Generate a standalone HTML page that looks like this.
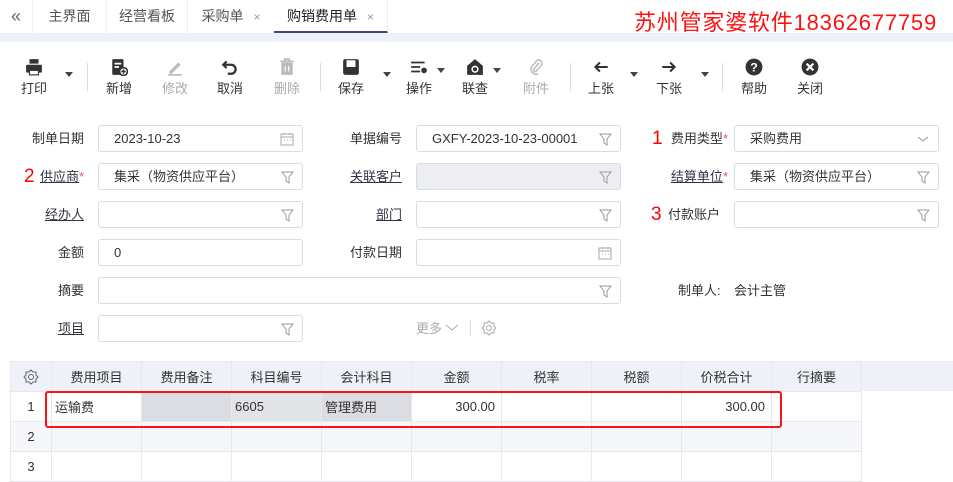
<!DOCTYPE html>
<html><head><meta charset="utf-8"><style>
*{margin:0;padding:0;box-sizing:border-box}
body{width:953px;height:471px;overflow:hidden;background:#fff;font-family:"Liberation Sans","Noto Sans CJK SC",sans-serif;font-size:13px;color:#333;position:relative}
.a{position:absolute;white-space:nowrap}
.tab{position:absolute;top:0;height:33px;line-height:33px;font-size:14px;color:#555;text-align:center}
.x{color:#999;font-size:12px;margin-left:10px}
.tb{position:absolute;top:58px;width:40px;text-align:center;font-size:13px;color:#333}
.tb svg{display:block;margin:0 auto 2px}
.dis{color:#aaa}
.dd{position:absolute;top:72px;width:0;height:0;border-left:4px solid transparent;border-right:4px solid transparent;border-top:5px solid #444}
.sep{position:absolute;top:63px;width:1px;height:28px;background:#ddd}
.lbl{position:absolute;font-size:13px;color:#333;text-align:right;line-height:27px}
.u{text-decoration:underline;color:#334}
.st{color:#e55}
.inp{position:absolute;height:27px;border:1px solid #d9dce3;border-radius:3px;background:#fff;line-height:25px;padding-left:15px;font-size:13px}
.ic{position:absolute;right:8px;top:6px}
.red{position:absolute;color:#f00;font-size:19px;line-height:27px}
table{position:absolute;left:10px;top:361px;border-collapse:collapse;font-size:13px}
td{border:1px solid #e6e8ec;height:30px;width:90px;text-align:center}
</style></head><body>
<div class="tab" style="left:0;width:32px;color:#666;font-size:18px">«</div>
<div class="a" style="left:32px;top:0;width:1px;height:33px;background:#eee"></div>
<div class="tab" style="left:33px;width:73px">主界面</div>
<div class="a" style="left:106px;top:0;width:1px;height:33px;background:#eee"></div>
<div class="tab" style="left:107px;width:80px">经营看板</div>
<div class="a" style="left:187px;top:0;width:1px;height:33px;background:#eee"></div>
<div class="tab" style="left:188px;width:86px">采购单<span class="x">×</span></div>
<div class="tab" style="left:274px;width:114px;color:#222;border-bottom:2px solid #3a4a7a;border-right:1px solid #eee">购销费用单<span class="x">×</span></div>
<div class="a" style="left:634px;top:5px;color:#f11;font-size:22px;letter-spacing:0.8px">苏州管家婆软件18362677759</div>
<div class="a" style="left:0;top:33px;width:953px;height:9px;background:#eef1f7"></div>
<!-- toolbar -->
<div class="tb" style="left:14px"><svg width="18" height="18" viewBox="0 0 16 16"><rect x="4" y="1" width="8" height="4" fill="#333"/><rect x="1" y="6" width="14" height="7" rx="1" fill="#333"/><rect x="4" y="11" width="8" height="4" fill="#fff" stroke="#333"/></svg>打印</div>
<div class="dd" style="left:65px"></div><div class="sep" style="left:87px"></div>
<div class="tb" style="left:99px"><svg width="18" height="18" viewBox="0 0 16 16"><rect x="2" y="1" width="10" height="14" rx="1" fill="#333"/><path d="M4 5h6M4 8h4" stroke="#fff" stroke-width="1.5"/><circle cx="12" cy="12" r="3.5" fill="#fff" stroke="#333" stroke-width="1.4"/><path d="M12 10v4M10 12h4" stroke="#333" stroke-width="1.3"/></svg>新增</div>
<div class="tb dis" style="left:155px"><svg width="18" height="18" viewBox="0 0 16 16"><path d="M3 12l8-8 2 2-8 8H3z" fill="#bbb"/><path d="M2 15h12" stroke="#bbb" stroke-width="1.5"/></svg>修改</div>
<div class="tb" style="left:210px"><svg width="18" height="18" viewBox="0 0 16 16"><path d="M5 3L2 6l3 3" fill="none" stroke="#333" stroke-width="2"/><path d="M2 6h7a4 4 0 010 8H6" fill="none" stroke="#333" stroke-width="2"/></svg>取消</div>
<div class="tb dis" style="left:267px"><svg width="18" height="18" viewBox="0 0 16 16"><path d="M2 3h12M6 3V1h4v2" stroke="#bbb" stroke-width="1.5" fill="none"/><rect x="3" y="4" width="10" height="11" fill="#bbb"/><path d="M6.5 7v5M9.5 7v5" stroke="#fff"/></svg>删除</div>
<div class="sep" style="left:320px"></div>
<div class="tb" style="left:331px"><svg width="18" height="18" viewBox="0 0 16 16"><rect x="1" y="1" width="14" height="14" rx="2" fill="#333"/><rect x="4" y="2" width="8" height="6" fill="#fff"/></svg>保存</div>
<div class="dd" style="left:383px"></div>
<div class="tb" style="left:399px"><svg width="18" height="18" viewBox="0 0 16 16"><path d="M1 4h12M1 8h8M1 12h8" stroke="#333" stroke-width="1.6"/><circle cx="12.5" cy="11" r="2.5" fill="#333"/></svg>操作</div>
<div class="dd" style="left:437px;top:68px"></div>
<div class="tb" style="left:455px"><svg width="18" height="18" viewBox="0 0 16 16"><path d="M1 7L8 1l7 6v8H1z" fill="#333"/><circle cx="8" cy="10" r="2.5" fill="none" stroke="#fff" stroke-width="1.4"/></svg>联查</div>
<div class="dd" style="left:493px;top:68px"></div>
<div class="tb dis" style="left:516px"><svg width="18" height="18" viewBox="0 0 16 16"><path d="M11 4L6 10a1.5 1.5 0 002 2l5-6a3 3 0 00-4-4L4 8a4.5 4.5 0 006 6" fill="none" stroke="#bbb" stroke-width="1.3"/></svg>附件</div>
<div class="sep" style="left:570px"></div>
<div class="tb" style="left:581px"><svg width="18" height="18" viewBox="0 0 16 16"><path d="M14 8H3M7 4L3 8l4 4" fill="none" stroke="#333" stroke-width="1.8"/></svg>上张</div>
<div class="dd" style="left:630px"></div>
<div class="tb" style="left:649px"><svg width="18" height="18" viewBox="0 0 16 16"><path d="M2 8h11M9 4l4 4-4 4" fill="none" stroke="#333" stroke-width="1.8"/></svg>下张</div>
<div class="dd" style="left:701px"></div><div class="sep" style="left:722px"></div>
<div class="tb" style="left:734px"><svg width="18" height="18" viewBox="0 0 16 16"><circle cx="8" cy="8" r="7.5" fill="#333"/><text x="8" y="12" font-size="11" font-weight="bold" fill="#fff" text-anchor="middle" font-family="Liberation Sans">?</text></svg>帮助</div>
<div class="tb" style="left:790px"><svg width="18" height="18" viewBox="0 0 16 16"><circle cx="8" cy="8" r="7.5" fill="#333"/><path d="M5 5l6 6M11 5l-6 6" stroke="#fff" stroke-width="2"/></svg>关闭</div>
<!-- form -->
<div class="lbl" style="left:20px;top:125px;width:64px">制单日期</div>
<div class="inp" style="left:98px;top:125px;width:205px">2023-10-23<svg class="ic" width="14" height="14" viewBox="0 0 14 14"><rect x="1" y="2" width="12" height="11" fill="none" stroke="#aaa"/><path d="M1 5h12M4 1v2M10 1v2M4 8h1M7 8h1M10 8h1" stroke="#aaa"/></svg></div>
<div class="lbl" style="left:330px;top:125px;width:72px">单据编号</div>
<div class="inp" style="left:416px;top:125px;width:205px">GXFY-2023-10-23-00001<svg class="ic" width="13" height="14" viewBox="0 0 13 14"><path d="M1 2h11L8 7v6L5 11V7z" fill="none" stroke="#999"/></svg></div>
<div class="red" style="left:652px;top:125px">1</div>
<div class="lbl" style="left:660px;top:125px;width:68px">费用类型<span class="st">*</span></div>
<div class="inp" style="left:734px;top:125px;width:205px">采购费用<svg class="ic" width="14" height="14" viewBox="0 0 14 14"><path d="M2 5l5 4 5-4" fill="none" stroke="#999"/></svg></div>

<div class="red" style="left:24px;top:163px">2</div>
<div class="lbl" style="left:40px;top:163px;width:50px;text-align:left"><span class="u">供应商</span><span class="st">*</span></div>
<div class="inp" style="left:98px;top:163px;width:205px">集采（物资供应平台）<svg class="ic" width="13" height="14" viewBox="0 0 13 14"><path d="M1 2h11L8 7v6L5 11V7z" fill="none" stroke="#999"/></svg></div>
<div class="lbl" style="left:330px;top:163px;width:72px"><span class="u">关联客户</span></div>
<div class="inp" style="left:416px;top:163px;width:205px;background:#eceef3"><svg class="ic" width="13" height="14" viewBox="0 0 13 14"><path d="M1 2h11L8 7v6L5 11V7z" fill="none" stroke="#999"/></svg></div>
<div class="lbl" style="left:660px;top:163px;width:68px"><span class="u">结算单位</span><span class="st">*</span></div>
<div class="inp" style="left:734px;top:163px;width:205px">集采（物资供应平台）<svg class="ic" width="13" height="14" viewBox="0 0 13 14"><path d="M1 2h11L8 7v6L5 11V7z" fill="none" stroke="#999"/></svg></div>

<div class="lbl" style="left:20px;top:201px;width:64px"><span class="u">经办人</span></div>
<div class="inp" style="left:98px;top:201px;width:205px"><svg class="ic" width="13" height="14" viewBox="0 0 13 14"><path d="M1 2h11L8 7v6L5 11V7z" fill="none" stroke="#999"/></svg></div>
<div class="lbl" style="left:330px;top:201px;width:72px"><span class="u">部门</span></div>
<div class="inp" style="left:416px;top:201px;width:205px"><svg class="ic" width="13" height="14" viewBox="0 0 13 14"><path d="M1 2h11L8 7v6L5 11V7z" fill="none" stroke="#999"/></svg></div>
<div class="red" style="left:651px;top:201px">3</div>
<div class="lbl" style="left:660px;top:201px;width:60px">付款账户</div>
<div class="inp" style="left:734px;top:201px;width:205px"><svg class="ic" width="13" height="14" viewBox="0 0 13 14"><path d="M1 2h11L8 7v6L5 11V7z" fill="none" stroke="#999"/></svg></div>

<div class="lbl" style="left:20px;top:239px;width:64px">金额</div>
<div class="inp" style="left:98px;top:239px;width:205px">0</div>
<div class="lbl" style="left:330px;top:239px;width:72px">付款日期</div>
<div class="inp" style="left:416px;top:239px;width:205px"><svg class="ic" width="14" height="14" viewBox="0 0 14 14"><rect x="1" y="2" width="12" height="11" fill="none" stroke="#aaa"/><path d="M1 5h12M4 1v2M10 1v2M4 8h1M7 8h1M10 8h1" stroke="#aaa"/></svg></div>

<div class="lbl" style="left:20px;top:277px;width:64px">摘要</div>
<div class="inp" style="left:98px;top:277px;width:523px"><svg class="ic" width="13" height="14" viewBox="0 0 13 14"><path d="M1 2h11L8 7v6L5 11V7z" fill="none" stroke="#999"/></svg></div>
<div class="a" style="left:678px;top:277px;line-height:27px">制单人:</div>
<div class="a" style="left:734px;top:277px;line-height:27px">会计主管</div>

<div class="lbl" style="left:20px;top:315px;width:64px"><span class="u">项目</span></div>
<div class="inp" style="left:98px;top:315px;width:205px"><svg class="ic" width="13" height="14" viewBox="0 0 13 14"><path d="M1 2h11L8 7v6L5 11V7z" fill="none" stroke="#999"/></svg></div>
<div class="a" style="left:416px;top:315px;line-height:27px;color:#aaa">更多</div>
<svg class="a" style="left:445px;top:323px" width="14" height="10" viewBox="0 0 14 10"><path d="M1 2l6 5 6-5" fill="none" stroke="#aaa"/></svg>
<div class="a" style="left:470px;top:320px;width:1px;height:16px;background:#ddd"></div>
<svg class="a" style="left:481px;top:320px" width="16" height="16" viewBox="0 0 16 16"><circle cx="8" cy="8" r="2.5" fill="none" stroke="#aaa"/><path d="M8 1l2 2h3v3l2 2-2 2v3h-3l-2 2-2-2H3v-3L1 8l2-2V3h3z" fill="none" stroke="#aaa"/></svg>
<!-- table -->
<div class="a" style="left:10px;top:361px;width:943px;height:30px;background:#eef1f7"></div>
<table>
<tr style="background:#eef1f7;color:#333"><td style="width:41px"><svg width="16" height="16" viewBox="0 0 16 16" style="vertical-align:middle"><circle cx="8" cy="8" r="2.5" fill="none" stroke="#666"/><path d="M8 1l2 2h3v3l2 2-2 2v3h-3l-2 2-2-2H3v-3L1 8l2-2V3h3z" fill="none" stroke="#666"/></svg></td><td>费用项目</td><td>费用备注</td><td>科目编号</td><td>会计科目</td><td>金额</td><td>税率</td><td>税额</td><td>价税合计</td><td>行摘要</td></tr>
<tr><td style="width:41px">1</td><td style="text-align:left;padding-left:3px">运输费</td><td style="background:#dcdde2"></td><td style="text-align:left;padding-left:3px;background:#e2e3e7">6605</td><td style="text-align:left;padding-left:3px;background:#dcdde2">管理费用</td><td style="text-align:right;padding-right:6px">300.00</td><td></td><td></td><td style="text-align:right;padding-right:6px">300.00</td><td></td></tr>
<tr style="background:#f5f7fa"><td style="width:41px">2</td><td></td><td></td><td></td><td></td><td></td><td></td><td></td><td></td><td></td></tr>
<tr><td style="width:41px">3</td><td></td><td></td><td></td><td></td><td></td><td></td><td></td><td></td><td></td></tr>
</table>
<div class="a" style="left:45px;top:391px;width:737px;height:37px;border:2.5px solid #f11;border-radius:3px"></div>
</body></html>
